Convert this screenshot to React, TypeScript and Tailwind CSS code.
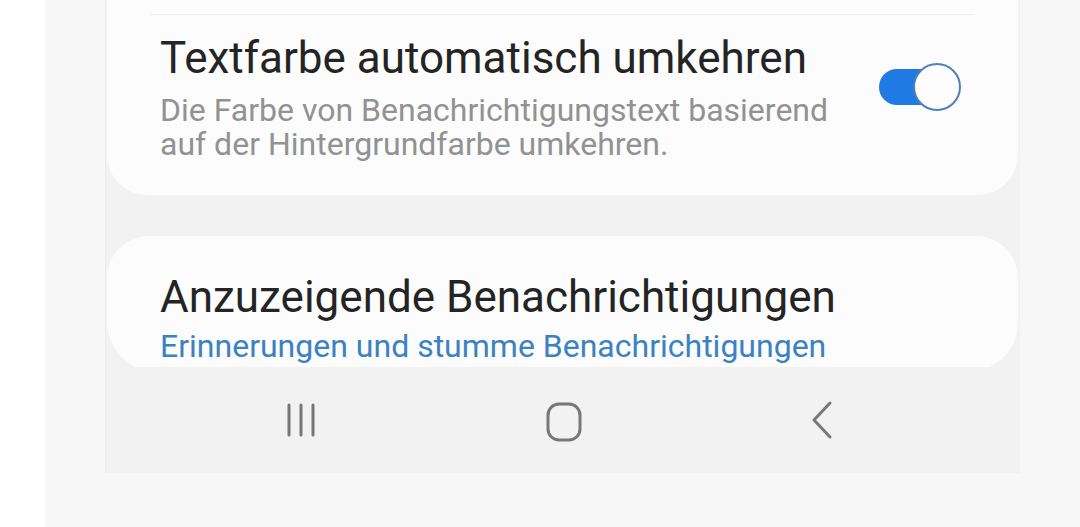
import React from "react";

function Toggle() {
  return (
    <div className="relative w-[82px] h-[48px] shrink-0">
      <div className="absolute left-0 top-[6px] w-[72px] h-[36px] rounded-full bg-[#1f7ae6]" />
      <div className="absolute right-0 top-0 w-[48px] h-[48px] rounded-full bg-[#fdfdfd] border-[2.5px] border-[#4d7fbd]" />
    </div>
  );
}

function NavBar() {
  return (
    <div className="h-[106px] shrink-0 flex items-center justify-between pl-[180px] pr-[187px] bg-[#f2f2f2]">
      <svg width="30" height="36" viewBox="0 0 30 36" fill="none" stroke="#777" strokeWidth="3" strokeLinecap="round">
        <line x1="3" y1="3" x2="3" y2="33" />
        <line x1="15" y1="3" x2="15" y2="33" />
        <line x1="27" y1="3" x2="27" y2="33" />
      </svg>
      <svg width="36" height="40" viewBox="0 0 36 40" fill="none" stroke="#777" strokeWidth="3" className="mt-[4px]">
        <rect x="2" y="2" width="32" height="36" rx="11" />
      </svg>
      <svg width="22" height="40" viewBox="0 0 22 40" fill="none" stroke="#777" strokeWidth="3" strokeLinecap="round" strokeLinejoin="round">
        <polyline points="19,3 3,20 19,37" />
      </svg>
    </div>
  );
}

export default function App() {
  return (
    <div
      className="w-[1080px] h-[527px] flex bg-[#f7f7f7] overflow-hidden"
      style={{ fontFamily: "Roboto, 'Noto Sans', 'Liberation Sans', sans-serif" }}
    >
      <div className="w-[45px] h-full bg-white shrink-0" />
      <div className="w-[60px] h-full shrink-0" />
      <div className="w-[915px] h-[473px] shrink-0 flex flex-col bg-[#f2f2f2] border-l border-[#ececec]">
        <div className="h-[367px] shrink-0 overflow-hidden flex flex-col gap-[41px] pl-[1px] pr-[2px]">
          {/* Card 1 */}
          <div className="-mt-[40px] h-[235px] shrink-0 rounded-[40px] bg-[#fcfcfc] flex flex-col">
            <div className="mt-[54px] ml-[43px] mr-[44px] h-px bg-[#f0f0f0]" />
            <div className="flex items-center pl-[53px] pr-[57px]">
              <div className="flex-1 flex flex-col pt-[17px]">
                <div className="text-[44px] leading-[52px] text-[#242424]">
                  Textfarbe automatisch umkehren
                </div>
                <div className="mt-[9px] text-[32px] leading-[34px] text-[#929292]">
                  <div>Die Farbe von Benachrichtigungstext basierend</div>
                  <div>auf der Hintergrundfarbe umkehren.</div>
                </div>
              </div>
              <div className="mt-[-2px]">
                <Toggle />
              </div>
            </div>
          </div>
          {/* Card 2 */}
          <div className="h-[136px] shrink-0 rounded-t-[42px] rounded-b-[50px] bg-[#fcfcfc] pl-[53px] pt-[35px] flex flex-col">
            <div className="text-[44px] leading-[52px] text-[#242424]">
              Anzuzeigende Benachrichtigungen
            </div>
            <div className="mt-[6px] text-[32px] leading-[34px] text-[#3b82c4]">
              Erinnerungen und stumme Benachrichtigungen
            </div>
          </div>
        </div>
        <NavBar />
      </div>
    </div>
  );
}
